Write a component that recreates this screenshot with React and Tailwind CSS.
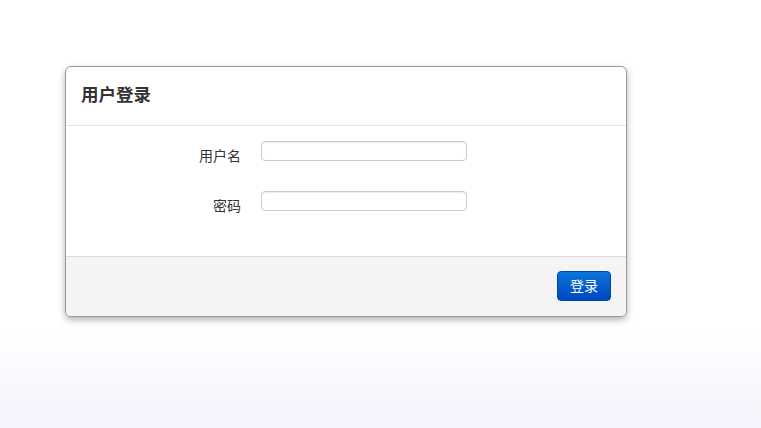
export default function App() {
  return (
    <div
      className="h-[428px] w-full pt-[66px] pl-[65px] bg-[linear-gradient(to_bottom,#ffffff_0%,#ffffff_77%,#f5f3fc_100%)]"
      style={{ fontFamily: '"Liberation Sans", "Noto Sans CJK SC", sans-serif' }}
    >
      <div className="w-[562px] rounded-[6px] border border-[#999999] bg-white shadow-[0_3px_7px_rgba(0,0,0,0.3)] overflow-hidden">
        <div className="h-[59px] border-b border-[#e5e5e5] flex items-center px-[15px]">
          <h3 className="text-[17.5px] font-bold text-[#333333] leading-none">用户登录</h3>
        </div>
        <div className="h-[130px] pt-[15px] flex flex-col gap-[30px]">
          <div className="h-[20px] flex items-start">
            <label className="w-[175px] h-[20px] text-right text-[14px] leading-[16px] pt-[7px] text-[#333333]">用户名</label>
            <input
              type="text"
              className="ml-[20px] w-[206px] h-[20px] rounded-[4px] border border-[#cccccc] bg-white shadow-[inset_0_1px_1px_rgba(0,0,0,0.075)] outline-none"
            />
          </div>
          <div className="h-[20px] flex items-start">
            <label className="w-[175px] h-[20px] text-right text-[14px] leading-[16px] pt-[7px] text-[#333333]">密码</label>
            <input
              type="password"
              className="ml-[20px] w-[206px] h-[20px] rounded-[4px] border border-[#cccccc] bg-white shadow-[inset_0_1px_1px_rgba(0,0,0,0.075)] outline-none"
            />
          </div>
        </div>
        <div className="h-[60px] border-t border-[#dddddd] bg-[#f4f4f4] flex items-start justify-end pt-[14px] pr-[15px]">
          <button className="w-[54px] h-[30px] rounded-[4px] border border-[#0044aa] bg-[linear-gradient(to_bottom,#0a74da,#0047bf)] text-white text-[14px] leading-none">
            登录
          </button>
        </div>
      </div>
    </div>
  );
}
